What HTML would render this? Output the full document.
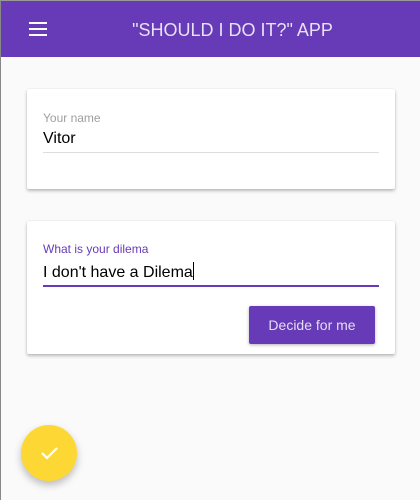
<!DOCTYPE html>
<html><head><style>
*{margin:0;padding:0;box-sizing:border-box}
body{width:420px;height:500px;background:#fafafa;font-family:"Liberation Sans",sans-serif;position:relative;overflow:hidden;border-left:1px solid #888;border-top:1px solid #999}
.hdr{position:absolute;left:0;top:0;width:419px;height:56px;background:#673ab7}
.hdr .t{position:absolute;left:0;right:0;top:19px;text-align:center;padding-left:44px;color:#e8e0f4;font-size:18px;letter-spacing:0}
.burg{position:absolute;left:28px;top:21px;width:18px}
.burg i{display:block;height:2px;background:#fff;margin-bottom:4px}
.card{position:absolute;left:26px;width:368px;background:#fff;border-radius:2px;box-shadow:0 2px 3px rgba(0,0,0,.25),0 0 1px rgba(0,0,0,.15)}
.lbl{position:absolute;left:16px;font-size:12px}
.val{position:absolute;left:16px;font-size:16px;color:#000}
.ln{position:absolute;left:16px;width:336px}
.btn{position:absolute;left:222px;top:85px;width:126px;height:38px;background:#673ab7;color:#e6dcf3;font-size:14px;text-align:center;line-height:38px;border-radius:2px;box-shadow:0 1px 3px rgba(0,0,0,.3)}
.fab{position:absolute;left:20px;top:424px;width:56px;height:56px;border-radius:50%;background:#fdd835;box-shadow:0 4px 8px rgba(0,0,0,.25)}
</style></head><body>
<div class="hdr"><div class="burg"><i></i><i></i><i></i></div><div class="t">"SHOULD I DO IT?" APP</div></div>
<div class="card" style="top:88px;height:100px">
<div class="lbl" style="top:22px;color:#9e9e9e">Your name</div>
<div class="val" style="top:41px">Vitor</div>
<div class="ln" style="top:63px;height:1px;background:#ddd"></div>
</div>
<div class="card" style="top:220px;height:133px">
<div class="lbl" style="top:21px;color:#673ab7">What is your dilema</div>
<div class="val" style="top:41px">I don't have a Dilema<span style="display:inline-block;width:1px;height:18px;background:#000;vertical-align:-3px"></span></div>
<div class="ln" style="top:64px;height:2px;background:#673ab7"></div>
<div class="btn">Decide for me</div>
</div>
<div class="fab"><svg width="56" height="56" viewBox="0 0 56 56"><path d="M21 28l5 5 10-10" stroke="#fff" stroke-width="2.2" fill="none"/></svg></div>
</body></html>
